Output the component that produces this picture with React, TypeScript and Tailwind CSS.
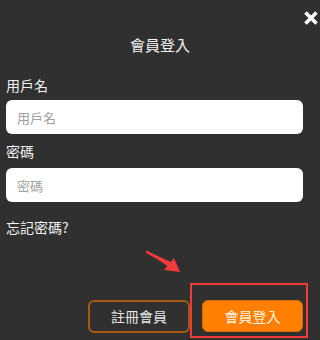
import React from "react";

export default function App() {
  const font = { fontFamily: '"Noto Sans CJK TC", "Noto Sans", sans-serif' };
  return (
    <div
      className="relative w-[320px] h-[340px] bg-[#303030] px-[6px] pt-[35px] text-white overflow-hidden"
      style={font}
    >
      <button className="absolute right-[1px] top-[9px] w-[16px] h-[17px] flex items-center justify-center">
        <svg viewBox="0 0 16 16" width="16" height="16">
          <path d="M2.5 2.5 L13.5 13.5 M13.5 2.5 L2.5 13.5" stroke="#ffffff" strokeWidth="3.6" strokeLinecap="butt" />
        </svg>
      </button>

      <h1 className="text-center text-[15px] leading-[20px] font-normal text-[#f2f2f2]">會員登入</h1>

      <div className="mt-[20px] text-[14px] leading-[20px] text-[#f2f2f2]">用戶名</div>
      <input
        className="mt-[5px] block w-[297px] h-[34px] rounded-[6px] bg-white px-[11px] text-[13px] text-[#333] placeholder:text-[#a0a0a0] outline-none"
        placeholder="用戶名"
        style={font}
      />

      <div className="mt-[7px] text-[14px] leading-[20px] text-[#f2f2f2]">密碼</div>
      <input
        type="password"
        className="mt-[7px] block w-[297px] h-[34px] rounded-[6px] bg-white px-[11px] text-[13px] text-[#333] placeholder:text-[#a0a0a0] outline-none"
        placeholder="密碼"
        style={font}
      />

      <div className="mt-[15px] text-[14px] leading-[20px] text-[#f2f2f2]">忘記密碼?</div>

      <div className="mt-[63px] flex justify-end gap-[12px] w-[297px]">
        <button
          className="w-[102px] h-[33px] rounded-[6px] border-2 border-[#a85a12] text-[14px] text-[#e6e6e6] bg-transparent"
          style={font}
        >
          註冊會員
        </button>
        <button
          className="w-[101px] h-[32px] rounded-[6px] border border-[#d96a00] bg-[#ff7f00] text-[14px] text-[#fff4e6]"
          style={font}
        >
          會員登入
        </button>
      </div>

      <div className="absolute left-[190px] top-[283px] w-[118px] h-[55px] border-[2.5px] border-[#f23a3a] pointer-events-none" />

      <svg className="absolute left-[140px] top-[245px] pointer-events-none" width="50" height="35" viewBox="0 0 50 35">
        <path d="M7 7 L31 21" stroke="#f23a3a" strokeWidth="2.4" strokeLinecap="round" />
        <path d="M7 6 L33 18 L30 23 Z" fill="#f23a3a" />
        <path d="M40 27 L24 25 L34 13 Z" fill="#f23a3a" />
      </svg>
    </div>
  );
}
